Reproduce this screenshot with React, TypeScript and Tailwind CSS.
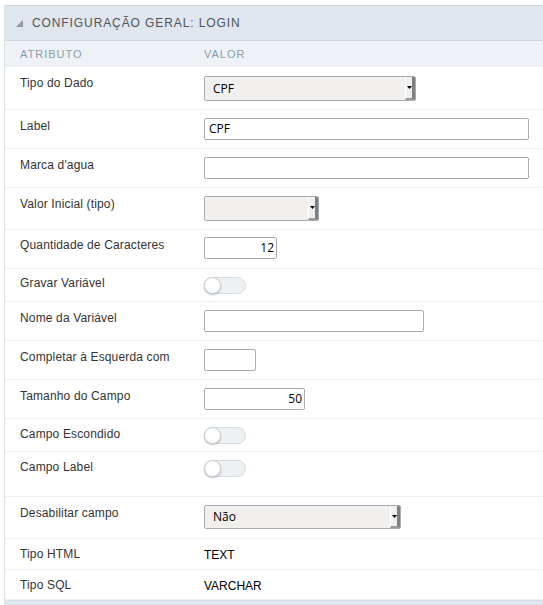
import React from "react";

const LABEL_FONT = { fontFamily: '"Liberation Sans", Arial, sans-serif' };
const INPUT_FONT = { fontFamily: '"Open Sans", "Noto Sans", sans-serif' };

function Select({ w, h, value }: { w: string; h: string; value?: string }) {
  return (
    <div
      className={`${w} ${h} flex items-stretch border border-[#a4abb3] rounded-[2px] bg-[#f1f0ee] overflow-hidden`}
    >
      <div className="flex-1 flex items-center pl-[8px] text-[12px] font-medium text-black" style={INPUT_FONT}>
        {value}
      </div>
      <div className="w-[10px] flex items-center justify-center bg-[#efefef] border-l border-l-white border-r-[3px] border-r-[#7f7f7f] border-b-2 border-b-[#9a9a9a]">
        <svg width="5" height="3" viewBox="0 0 5 3">
          <path d="M0 0H5L2.5 3Z" fill="#000" />
        </svg>
      </div>
    </div>
  );
}

function TextInput({ w, value, right }: { w: string; value?: string; right?: boolean }) {
  return (
    <div
      className={`${w} h-[22px] border border-[#a4abb3] rounded-[2px] bg-white flex items-center text-[12px] font-medium text-black ${
        right ? "justify-end pr-[2px]" : "pl-[4px]"
      }`}
      style={INPUT_FONT}
    >
      {value}
    </div>
  );
}

function Toggle() {
  return (
    <div className="relative w-[42px] h-[17px] rounded-full bg-[#edf1f4] border border-[#d6dee4]">
      <div className="absolute left-[-1px] top-[-1px] w-[17px] h-[17px] rounded-full bg-white border border-[#c9cfd5] shadow-[0_1px_2px_rgba(0,0,0,0.25)]" />
    </div>
  );
}

type Row = {
  label: string;
  h: string;
  labelPt: string;
  valuePt?: string;
  center?: boolean;
  value: React.ReactNode;
};

export default function App() {
  const rows: Row[] = [
    { label: "Tipo do Dado", h: "h-[43px]", labelPt: "pt-[8px]", valuePt: "pt-[9px]", value: <Select w="w-[212px]" h="h-[25px]" value="CPF" /> },
    { label: "Label", h: "h-[39px]", labelPt: "pt-[8px]", valuePt: "pt-[8px]", value: <TextInput w="w-[325px]" value="CPF" /> },
    { label: "Marca d'agua", h: "h-[39px]", labelPt: "pt-[8px]", valuePt: "pt-[8px]", value: <TextInput w="w-[325px]" /> },
    { label: "Valor Inicial (tipo)", h: "h-[42px]", labelPt: "pt-[8px]", valuePt: "pt-[8px]", value: <Select w="w-[115px]" h="h-[25px]" /> },
    { label: "Quantidade de Caracteres", h: "h-[39px]", labelPt: "pt-[7px]", valuePt: "pt-[7px]", value: <TextInput w="w-[73px]" value="12" right /> },
    { label: "Gravar Variável", h: "h-[33px]", labelPt: "pt-[6px]", valuePt: "pt-[8px]", value: <Toggle /> },
    { label: "Nome da Variável", h: "h-[39px]", labelPt: "pt-[8px]", valuePt: "pt-[8px]", value: <TextInput w="w-[220px]" /> },
    { label: "Completar à Esquerda com", h: "h-[39px]", labelPt: "pt-[8px]", valuePt: "pt-[8px]", value: <TextInput w="w-[52px]" /> },
    { label: "Tamanho do Campo", h: "h-[39px]", labelPt: "pt-[8px]", valuePt: "pt-[8px]", value: <TextInput w="w-[101px]" value="50" right /> },
    { label: "Campo Escondido", h: "h-[33px]", labelPt: "pt-[7px]", valuePt: "pt-[8px]", value: <Toggle /> },
    { label: "Campo Label", h: "h-[45px]", labelPt: "pt-[7px]", valuePt: "pt-[8px]", value: <Toggle /> },
    { label: "Desabilitar campo", h: "h-[42px]", labelPt: "pt-[8px]", valuePt: "pt-[8px]", value: <Select w="w-[197px]" h="h-[24px]" value="Não" /> },
    { label: "Tipo HTML", h: "h-[31px]", labelPt: "", center: true, value: <span className="text-[12px] text-black">TEXT</span> },
    { label: "Tipo SQL", h: "h-[30px]", labelPt: "", center: true, value: <span className="text-[12px] text-black">VARCHAR</span> },
  ];

  return (
    <div className="w-[543px] h-[605px] bg-white overflow-hidden pt-[5px] pl-[4px]" style={LABEL_FONT}>
      <div className="border-l border-[#dce3e9]">
        {/* Title bar */}
        <div className="h-[36px] bg-[#dfe6ee] border-t border-b border-[#d0d9e2] flex items-center pl-[11px]">
          <svg width="7" height="7" viewBox="0 0 7 7" className="mt-[1px]">
            <path d="M7 0V7H0Z" fill="#8e99a4" />
          </svg>
          <span className="ml-[9px] text-[12px] tracking-[0.9px] text-[#4f555b]">CONFIGURAÇÃO GERAL: LOGIN</span>
        </div>
        {/* Column headers */}
        <div className="h-[26px] bg-[#eef2f6] flex items-center text-[11px] tracking-[1px] text-[#8c9cab]">
          <div className="w-[199px] pl-[15px]">ATRIBUTO</div>
          <div>VALOR</div>
        </div>
        {rows.map((r) => (
          <div key={r.label} className={`${r.h} flex border-b border-[#eef1f4] ${r.center ? "items-center" : ""}`}>
            <div className={`w-[199px] pl-[15px] ${r.labelPt} text-[12px] leading-[16px] tracking-[0.15px] text-[#333]`}>{r.label}</div>
            <div className={`${r.valuePt ?? ""}`}>{r.value}</div>
          </div>
        ))}
        <div className="h-[6px] bg-[#dfe6ee] border-t border-[#d6dee6]" />
      </div>
    </div>
  );
}
